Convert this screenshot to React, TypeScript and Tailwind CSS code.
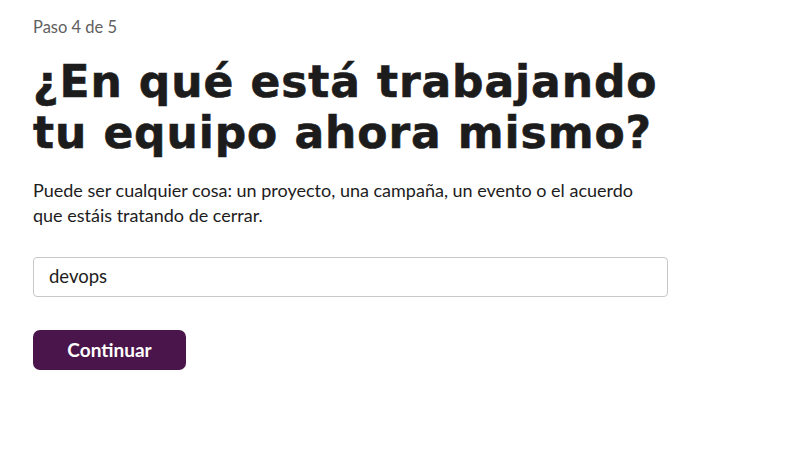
export default function App() {
  return (
    <div className="min-h-screen bg-white font-['Lato','Noto_Sans',sans-serif] text-[#1d1c1d]">
      <div className="pl-[33px] pt-[17px] w-[673px]">
        <p className="text-[16.5px] leading-[20px] text-[#616061]">Paso 4 de 5</p>

        <h1 className="mt-[19px] font-['DejaVu_Sans',sans-serif] font-bold text-[44px] leading-[51px] tracking-[0.9px] [-webkit-text-stroke:0.6px_#1d1c1d] text-[#1d1c1d]">
          ¿En qué está trabajando
          <br />
          tu equipo ahora mismo?
        </h1>

        <p className="mt-[20px] max-w-[620px] text-[18px] leading-[25px] text-[#1d1c1d]">
          Puede ser cualquier cosa: un proyecto, una campaña, un evento o el acuerdo que estáis tratando de cerrar.
        </p>

        <div className="mt-[29px] w-[635px] h-[40px] border border-[#c9c8c9] rounded-[4px] flex items-center px-[15px]">
          <span className="text-[18.5px] text-[#1d1c1d]">devops</span>
        </div>

        <button className="mt-[33px] w-[153px] h-[40px] rounded-[7px] bg-[#4a154b] text-white font-bold text-[19px]">
          Continuar
        </button>
      </div>
    </div>
  );
}
